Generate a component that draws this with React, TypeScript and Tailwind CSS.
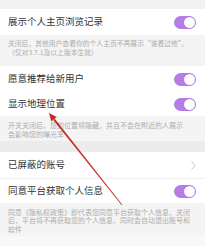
import React from "react";

const font = { fontFamily: '"Noto Sans CJK SC", "Noto Sans", sans-serif' };

function Toggle() {
  return (
    <div className="relative h-[13px] w-[22px] rounded-full bg-[#b57cea]">
      <div className="absolute right-[1px] top-[1px] h-[11px] w-[11px] rounded-full bg-white shadow-[0_0_1px_rgba(0,0,0,0.3)]" />
    </div>
  );
}

function Row({ title, h, right }: { title: string; h: string; right: React.ReactNode }) {
  return (
    <div className={`flex items-center justify-between bg-white pl-2 pr-[9px] ${h}`}>
      <span className="text-[9.5px] leading-none text-[#333333]">{title}</span>
      {right}
    </div>
  );
}

function Chevron() {
  return (
    <svg width="5" height="9" viewBox="0 0 5 9">
      <polyline points="0.5,0.5 4.3,4.5 0.5,8.5" fill="none" stroke="#bdbdbd" strokeWidth="0.9" />
    </svg>
  );
}

export default function App() {
  return (
    <div lang="zh-CN" style={font} className="relative h-[246px] w-[205px] overflow-hidden bg-[#f4f4f4]">
      <div className="h-[9px] bg-[#f2f2f2]" />
      <Row title="展示个人主页浏览记录" h="h-[26px]" right={<Toggle />} />
      <div className="h-[31px] whitespace-nowrap px-2 pt-[4px] text-[6.8px] leading-[9px] text-[#adadad]">
        <div>关闭后，其他用户查看你的个人主页不再展示“谁看过他”。</div>
        <div>（仅对3.7.1及以上版本生效）</div>
      </div>
      <Row title="愿意推荐给新用户" h="h-[26px]" right={<Toggle />} />
      <Row title="显示地理位置" h="h-[24px]" right={<Toggle />} />
      <div className="h-[25px] whitespace-nowrap px-2 pt-[4.5px] text-[7px] leading-[9px] text-[#adadad]">
        <div>开关关闭后，您的位置将隐藏，并且不会在附近的人展示</div>
        <div>会影响您的曝光率</div>
      </div>
      <div className="h-[11px] bg-[#ececec]" />
      <Row title="已屏蔽的账号" h="h-[26px]" right={<Chevron />} />
      <div className="h-px bg-[#f1f1f1]" />
      <Row title="同意平台获取个人信息" h="h-[24px]" right={<Toggle />} />
      <div className="h-[33px] whitespace-nowrap px-2 pt-[4.5px] text-[7px] leading-[8.6px] text-[#adadad]">
        <div>同意《隐私权政策》即代表您同意平台获取个人信息，关闭</div>
        <div>后，平台将不再获取您的个人信息，同时会自动退出账号和</div>
        <div>软件</div>
      </div>
      <div className="h-[10px] bg-[#f8f8f8]" />

      <svg className="pointer-events-none absolute left-0 top-0" width="205" height="246" viewBox="0 0 205 246">
        <polygon points="49,113 51.3,121.5 56.7,117.1" fill="#c42f25" />
        <polygon points="53.2,119.9 54.8,118.7 122.3,204.75 121.7,205.25" fill="#c42f25" />
      </svg>
    </div>
  );
}
